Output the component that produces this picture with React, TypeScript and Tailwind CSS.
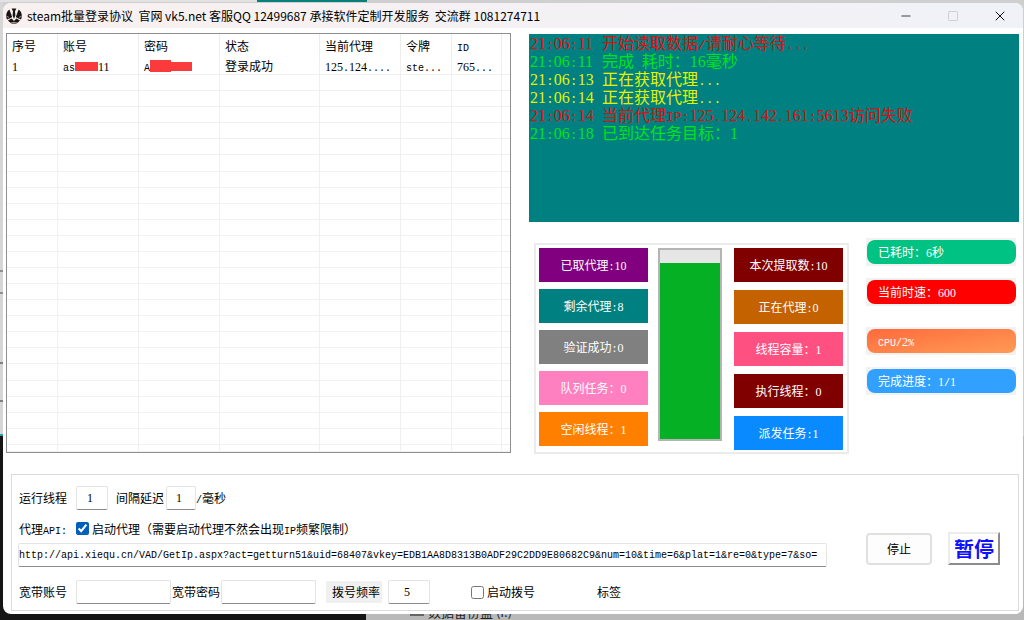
import React from 'react';
import { Minus, Square, X } from 'lucide-react';

type LogLine = { time: string; text: string; color: string };
type Stat = { label: string; color: string };

const API_URL =
  'http://api.xiequ.cn/VAD/GetIp.aspx?act=getturn51&uid=68407&vkey=EDB1AA8D8313B0ADF29C2DD9E80682C9&num=10&time=6&plat=1&re=0&type=7&so=';

const logs: LogLine[] = [
  { time: '21:06:11', text: '开始读取数据/请耐心等待...', color: 'text-[#dc1010]' },
  { time: '21:06:11', text: '完成 耗时：16毫秒', color: 'text-[#00e413]' },
  { time: '21:06:13', text: '正在获取代理...', color: 'text-[#e6f000]' },
  { time: '21:06:14', text: '正在获取代理...', color: 'text-[#e6f000]' },
  { time: '21:06:14', text: '当前代理IP:125.124.142.161:5613访问失败', color: 'text-[#dc1010]' },
  { time: '21:06:18', text: '已到达任务目标：1', color: 'text-[#00e413]' },
];

const leftStats: Stat[] = [
  { label: '已取代理:10', color: 'bg-[#800080]' },
  { label: '剩余代理:8', color: 'bg-[#008080]' },
  { label: '验证成功:0', color: 'bg-[#808080]' },
  { label: '队列任务：0', color: 'bg-[#ff80c0]' },
  { label: '空闲线程：1', color: 'bg-[#ff8000]' },
];

const rightStats: Stat[] = [
  { label: '本次提取数:10', color: 'bg-[#800000]' },
  { label: '正在代理:0', color: 'bg-[#c46200]' },
  { label: '线程容量：1', color: 'bg-[#ff5082]' },
  { label: '执行线程：0', color: 'bg-[#800000]' },
  { label: '派发任务:1', color: 'bg-[#0a8aff]' },
];

const columns = [
  { name: '序号', width: 'w-[51px]' },
  { name: '账号', width: 'w-[81px]' },
  { name: '密码', width: 'w-[81px]' },
  { name: '状态', width: 'w-[100px]' },
  { name: '当前代理', width: 'w-[81px]' },
  { name: '令牌', width: 'w-[51px]' },
  { name: 'ID', width: 'w-[50px]' },
  { name: '', width: '' },
];

// Half-width runs: digits in the serif face, letters and punctuation in mono,
// everything else stays in the CJK face
const Txt = ({ children, size = 'text-[10px]' }: { children: string; size?: string }) => (
  <>
    {children.split(/([0-9]+|[\x20-\x2f\x3a-\x7e]+)/).map((part, i) => {
      if (i % 2 === 0) return part;
      return /^[0-9]/.test(part) ? (
        <span key={i} className="font-['Liberation_Serif',serif] leading-none">
          {part}
        </span>
      ) : (
        <span key={i} className={`font-['Liberation_Mono',monospace] leading-none whitespace-pre ${size}`}>
          {part}
        </span>
      );
    })}
  </>
);

const TextBox = ({ id, value = '', className }: { id: string; value?: string; className: string }) => (
  <input
    id={id}
    type="text"
    defaultValue={value}
    className={`h-6 rounded-xs border border-[#e4e4e4] border-b-[#8c8c8c] bg-white text-black outline-none ${className}`}
  />
);

const numberBox = "pr-1 text-center font-['Liberation_Serif',serif] text-xs";

const StatColumn = ({ stats, className }: { stats: Stat[]; className: string }) => (
  <div className={`flex flex-col ${className}`}>
    {stats.map((s) => (
      <div key={s.label} className={`flex h-[34px] items-center justify-center text-white ${s.color}`}>
        <span>
          <Txt>{s.label}</Txt>
        </span>
      </div>
    ))}
  </div>
);

const Pill = ({ label, color }: { label: string; color: string }) => (
  <div className="h-7 bg-[#f2f2f2] py-0.5 pl-px">
    <div className={`flex h-6 items-center rounded-lg pl-[11px] text-white ${color}`}>
      <span>
        <Txt>{label}</Txt>
      </span>
    </div>
  </div>
);

// Strips of the desktop that stay visible around the window
const Desktop = () => (
  <div className="absolute inset-0 flex flex-col overflow-hidden bg-[#cfcfcf]">
    <div className="flex h-[2px] shrink-0">
      <div className="w-[257px] bg-[#e2e2e2]" />
      <div className="w-[110px] bg-[#087f7c]" />
    </div>
    <div className="flex h-[432px] w-[3px] shrink-0 flex-col justify-end bg-[#d6d6d6] pb-8">
      <div className="mb-5 h-[2px] bg-[#909090]" />
      <div className="mb-[68px] h-[2px] bg-[#909090]" />
      <div className="mb-9 h-[2px] bg-[#808080]" />
      <div className="h-[2px] bg-[#808080]" />
    </div>
    <div className="h-[2px] w-[3px] shrink-0 bg-[#2a9fb5]" />
    <div className="flex flex-1 items-end">
      <div className="h-full w-[366px] bg-[#151515]" />
      <div className="flex h-full flex-1 items-end bg-[#b9b9b9] pl-[44px] text-[13px] leading-4 text-[#222]">
        <span className="mr-1 mb-[4px] h-[2px] w-[14px] bg-[#666]" />
        <span>数据备份盘 (I:)</span>
      </div>
    </div>
  </div>
);

const AppIcon = () => (
  <svg viewBox="0 0 16 16" className="h-4 w-4">
    <path d="M3.4 1.6C1.2 3 .2 5.2.2 8c0 1.2.3 2.4.8 3.4L4.6 10 6.2 9z" fill="#181413" />
    <path d="M12.6 1.6C14.8 3 15.8 5.2 15.8 8c0 1.2-.3 2.4-.8 3.4L11.4 10 9.8 9z" fill="#181413" />
    <path d="M5.6.6h4.8L9 3.2l.4 4L8 11 6.6 7.2l.4-4z" fill="#181413" />
    <path d="M2 12.6 5.6 10.6 8 13l2.4-2.4 3.6 2-2.4 2.2L8 14.2l-3.6.6z" fill="#181413" />
    <path d="M5.4 15.4h5.2" stroke="#5a4642" strokeWidth=".9" />
    <path d="M.6 8.4 3 9.4M15.4 8.4 13 9.4" stroke="#f8f4f2" strokeWidth=".6" />
  </svg>
);

const TitleBar = () => (
  <header className="flex h-[25px] items-center bg-gradient-to-r from-[#f9f0f0] to-[#f0f2f8] pl-[3px]">
    <AppIcon />
    <h1 className="flex-1 pl-[5px] text-xs whitespace-pre">steam批量登录协议  官网 vk5.net 客服QQ 12499687 承接软件定制开发服务  交流群 1081274711</h1>
    <button aria-label="最小化" className="flex w-[47px] justify-center">
      <Minus className="h-3.5 w-3.5 text-[#222]" strokeWidth={1.5} />
    </button>
    <button aria-label="最大化" disabled className="flex w-[47px] justify-center">
      <Square className="h-3 w-3 text-[#c4c4c6]" strokeWidth={1.5} />
    </button>
    <button aria-label="关闭" className="flex w-[47px] justify-center">
      <X className="h-4 w-4 text-[#111]" strokeWidth={1.5} />
    </button>
  </header>
);

const AccountTable = () => (
  <div className="h-[420px] w-[505px] shrink-0 overflow-hidden border border-[#8f8f8f]">
    <table className="h-[418px] w-full table-fixed border-separate border-spacing-0 text-left leading-[14px]">
      <thead>
        <tr className="h-6">
          {columns.map((c) => (
            <th key={c.name} className={`border-r border-[#ececec] p-0 pl-[5px] font-normal last:border-r-0 ${c.width}`}>
              <Txt>{c.name}</Txt>
            </th>
          ))}
        </tr>
      </thead>
      <tbody className="[&_td]:border-r [&_td]:border-b [&_td]:border-[#f0f0f0] [&_td]:p-0 [&_td]:pl-[5px] [&_td:last-child]:border-r-0">
        <tr className="h-[17px]">
          <td><Txt>1</Txt></td>
          <td>
            <div className="flex h-[14px] items-center">
              <span><Txt>as</Txt></span>
              <span className="h-[9px] w-[23px] bg-[#fb3b3b]" />
              <span><Txt>11</Txt></span>
            </div>
          </td>
          <td>
            <div className="flex h-[14px] items-center">
              <span><Txt>A</Txt></span>
              <span className="h-3 w-[21px] bg-[#fb3b3b]" />
              <span className="h-[9px] w-[21px] bg-[#fb3b3b]" />
            </div>
          </td>
          <td>登录成功</td>
          <td><Txt>125.124....</Txt></td>
          <td><Txt>ste...</Txt></td>
          <td><Txt>765...</Txt></td>
          <td />
        </tr>
        {Array.from({ length: 23 }, (_, row) => (
          <tr key={row} className="h-4">
            {columns.map((c) => (
              <td key={c.name} />
            ))}
          </tr>
        ))}
        <tr className="h-[7px]">
          {columns.map((c) => (
            <td key={c.name} />
          ))}
        </tr>
      </tbody>
    </table>
  </div>
);

const LogPanel = () => (
  <div className="h-[188px] bg-[#008080] pt-px pl-px font-['Liberation_Serif','Noto_Sans_CJK_SC',serif] text-base leading-[18px]">
    {logs.map((l, i) => (
      <p key={i} className={`flex h-[18px] items-center ${l.color}`}>
        <span className="w-[72px]">
          <Txt size="text-[13px]">{l.time}</Txt>
        </span>
        <span className="whitespace-nowrap">
          <Txt size="text-[13px]">{l.text}</Txt>
        </span>
      </p>
    ))}
  </div>
);

const SettingsPanel = () => (
  <section className="mr-1 ml-2 flex h-[137px] border border-[#dcdcdc] pl-1.5">
    <div className="flex w-[809px] flex-col pt-[11px]">
      <div className="flex h-6 items-center">
        <label htmlFor="threads" className="w-[58px] pl-px">运行线程</label>
        <TextBox id="threads" value="1" className={`w-8 ${numberBox}`} />
        <label htmlFor="delay" className="pr-0.5 pl-2">间隔延迟</label>
        <TextBox id="delay" value="1" className={`w-[30px] ${numberBox}`} />
        <span><Txt>/毫秒</Txt></span>
      </div>
      <div className="flex h-[33px] items-center pt-1">
        <label htmlFor="api" className="w-[58px] pl-px"><Txt>代理API:</Txt></label>
        <label className="flex items-center gap-[3px]">
          <input type="checkbox" defaultChecked className="h-[13px] w-[13px] accent-[#005fb8]" />
          <span><Txt>启动代理（需要启动代理不然会出现IP频繁限制）</Txt></span>
        </label>
      </div>
      <TextBox id="api" value={API_URL} className="w-full font-['Liberation_Mono',monospace] text-[10px]" />
      <div className="mt-[11px] flex h-7 items-center">
        <label htmlFor="account" className="w-[58px] pl-px">宽带账号</label>
        <TextBox id="account" className="w-[95px]" />
        <label htmlFor="password" className="px-px">宽带密码</label>
        <TextBox id="password" className="w-[95px]" />
        <label htmlFor="rate" className="ml-2.5 bg-[#f0f0f0] py-[3px] pr-0.5 pl-[6px]">拨号频率</label>
        <TextBox id="rate" value="5" className={`ml-1.5 w-[42px] ${numberBox}`} />
        <label className="ml-[41px] flex items-center gap-[3px]">
          <input type="checkbox" className="h-[13px] w-[13px]" />
          启动拨号
        </label>
        <span className="ml-[62px]">标签</span>
      </div>
    </div>
    <div className="flex flex-1 items-center justify-end gap-4 pt-3 pr-[18px]">
      <button className="h-8 w-[66px] rounded-sm border-2 border-[#e0e0e0] bg-[#fdfdfd]">停止</button>
      <button className="flex h-[33px] w-[52px] items-center justify-center border-2 border-[#ececec] border-r-[#8c8c8c] border-b-[#8c8c8c] text-xl font-bold text-[#1010ff]">
        暂停
      </button>
    </div>
  </section>
);

const App: React.FC = () => (
  <div className="relative min-h-screen pt-[3px] pr-px pb-1.5 pl-[3px] font-['Noto_Sans_CJK_SC',sans-serif] text-xs text-black">
    <Desktop />
    <main className="relative overflow-hidden rounded-lg bg-white pb-[3px]">
      <TitleBar />
      <div className="flex gap-[18px] pt-[5px] pr-1 pb-5 pl-[3px]">
        <AccountTable />
        <div className="min-w-0 flex-1 pt-px">
          <LogPanel />
          <div className="flex items-start pl-[5px]">
            <div className="mt-[21px] flex h-[211px] w-[315px] shrink-0 border-2 border-[#ebebeb] px-[3px] pt-[3px]">
              <StatColumn stats={leftStats} className="w-[109px] gap-[7px]" />
              <div
                role="progressbar"
                aria-valuenow={93}
                aria-label="进度"
                className="mr-3 ml-2.5 flex h-[193px] w-16 flex-col justify-end border-2 border-[#b4b4b4] bg-[#e6e6e6]"
              >
                <div className="bg-[#06b025]" style={{ height: '93%' }} />
              </div>
              <StatColumn stats={rightStats} className="w-[109px] gap-2" />
            </div>
            <div className="ml-[17px] flex flex-1 flex-col gap-[21px] pt-4 pr-[3px]">
              <div className="flex flex-col gap-3">
                <Pill label="已耗时：6秒" color="bg-[#00c383]" />
                <Pill label="当前时速：600" color="bg-[#ff0000]" />
              </div>
              <div className="flex flex-col gap-3">
                <Pill label="CPU/2%" color="bg-gradient-to-br from-[#ff6a3c] to-[#ff9a55]" />
                <Pill label="完成进度：1/1" color="bg-[#32a0ff]" />
              </div>
            </div>
          </div>
        </div>
      </div>
      <SettingsPanel />
    </main>
  </div>
);

export default App;
